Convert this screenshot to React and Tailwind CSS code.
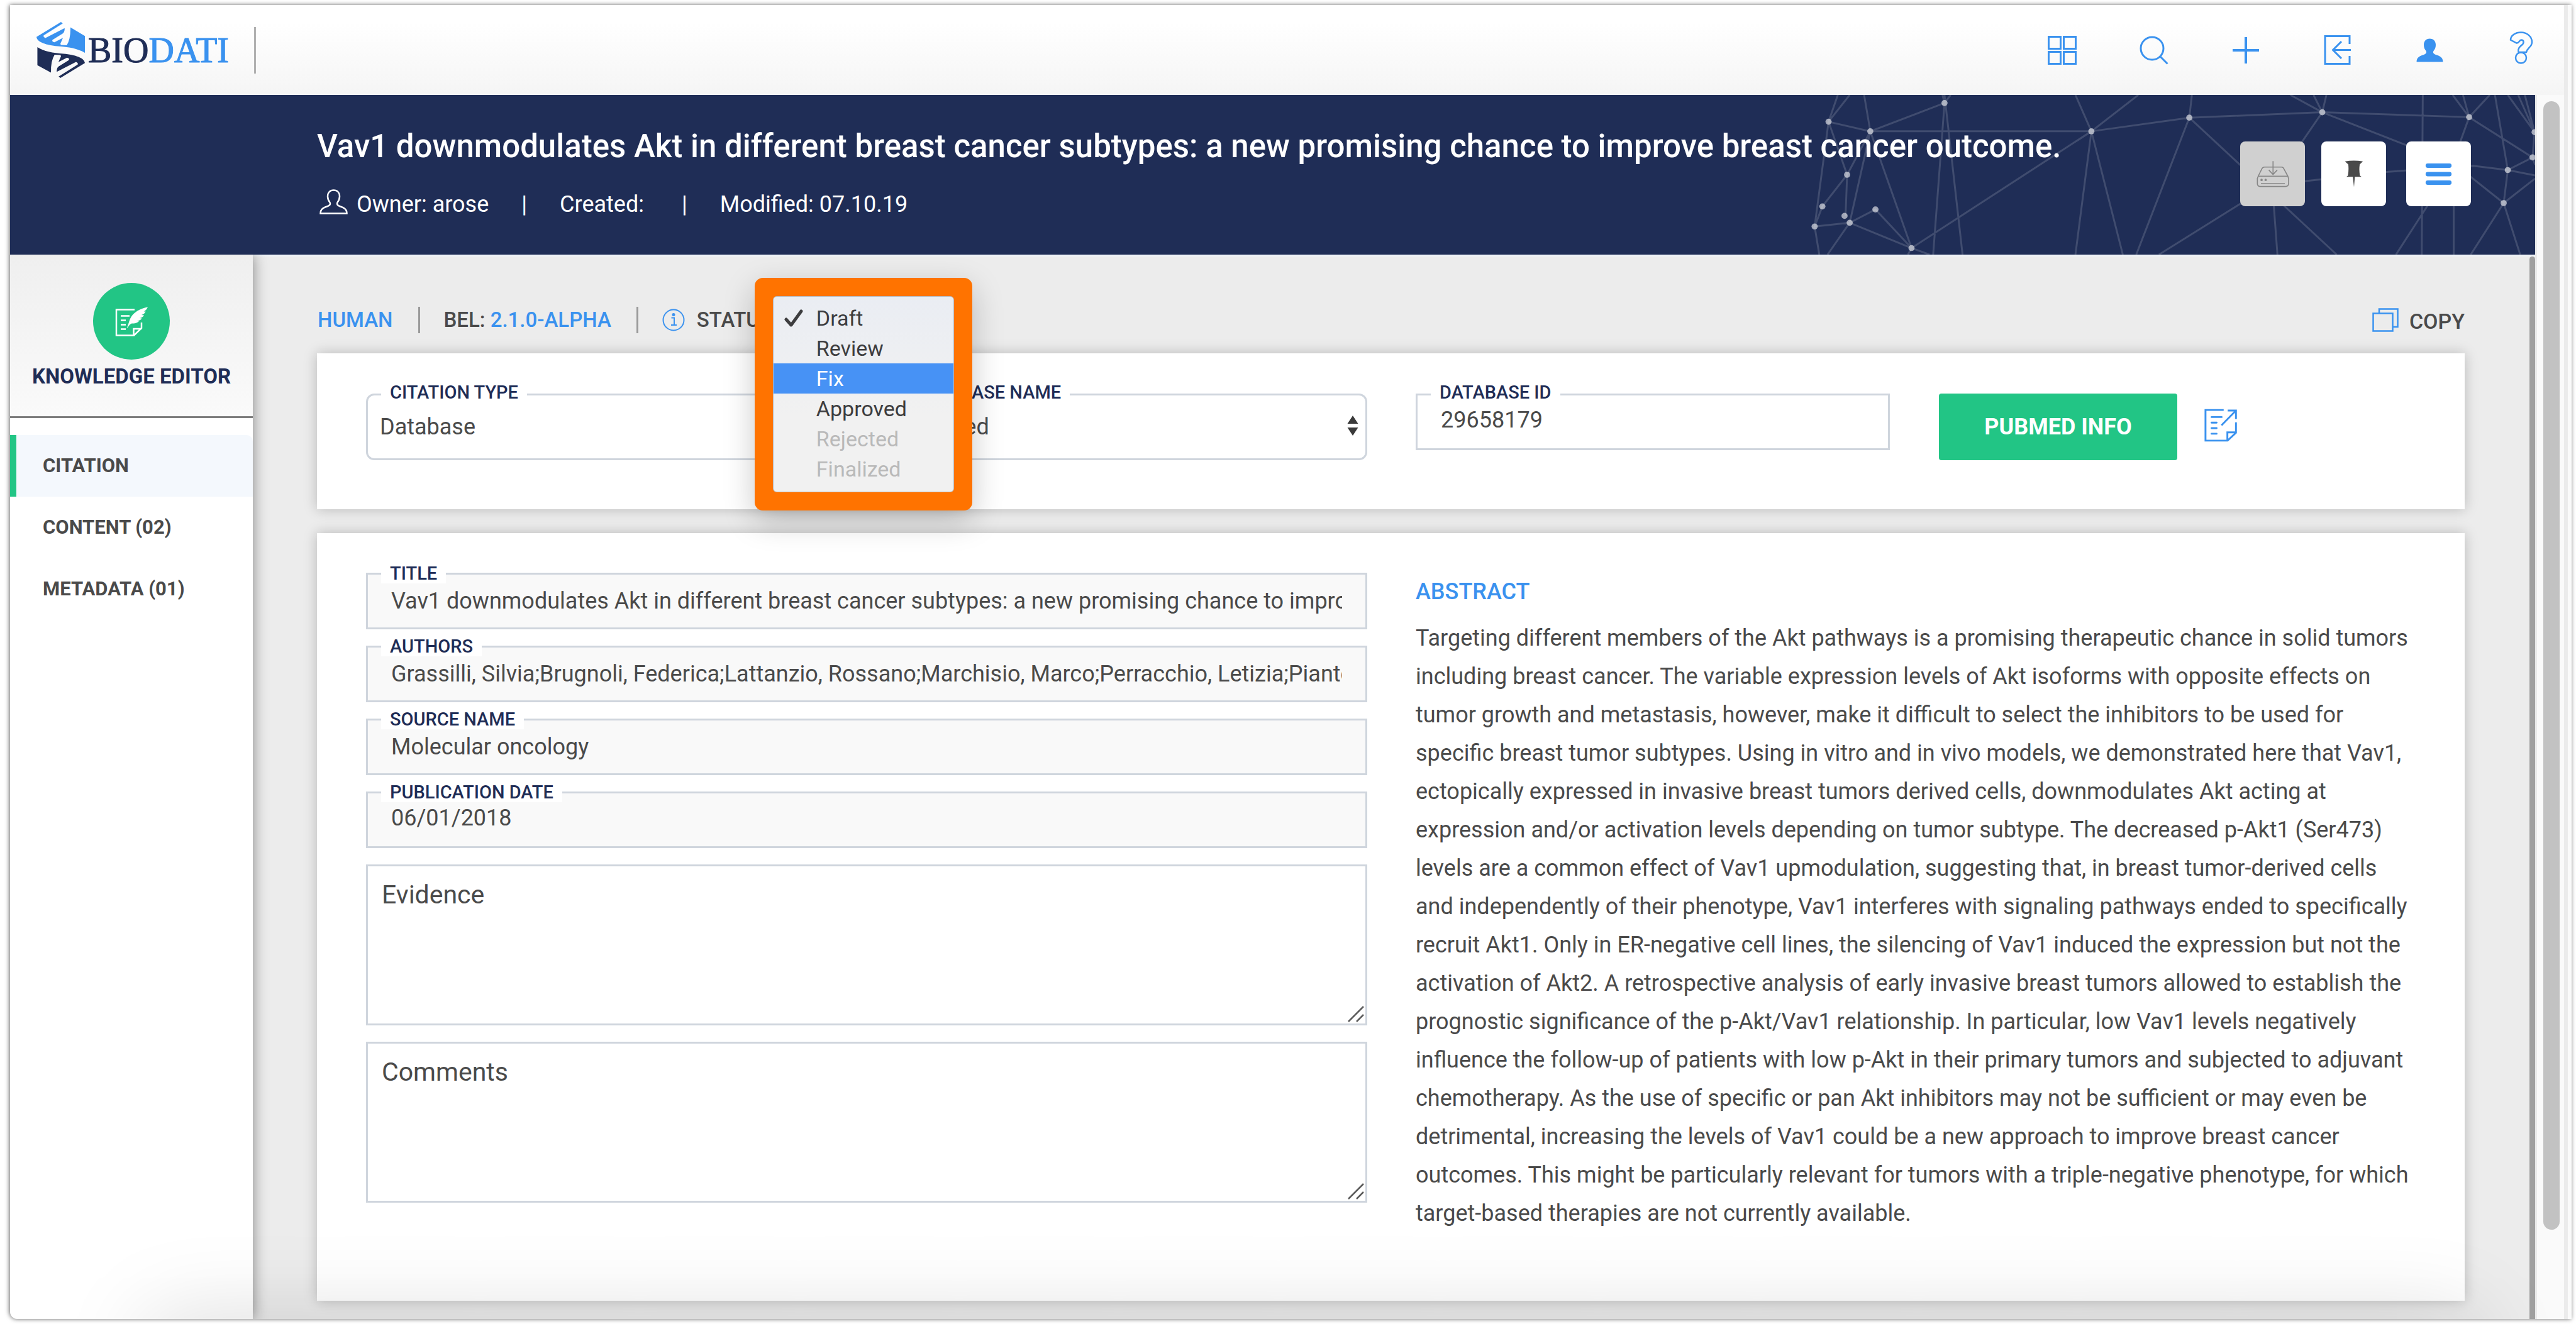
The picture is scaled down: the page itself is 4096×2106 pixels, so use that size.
import React from "react";

const stroke = { fill: "none", stroke: "currentColor" };

function Logo() {
  return (
    <svg viewBox="203 124 267 332" preserveAspectRatio="none" className="h-[89px] w-[77px]" aria-hidden="true">
      <path
        fill="#3a92ef"
        d="M203 213L338 124L348 132L243 203Q238 212 252 219L358 160Q360 182 348 192L291 230Q287 241 302 244L349 218Q346 226 335 252L337 260L370 262Q392 225 390 156L470 207V307C430 282 380 272 320 268C260 262 206 245 203 213Z"
      />
      <path
        transform="rotate(180 336.5 290)"
        fill="#1f2d56"
        d="M203 213L338 124L348 132L243 203Q238 212 252 219L358 160Q360 182 348 192L291 230Q287 241 302 244L349 218Q346 226 335 252L337 260L370 262Q392 225 390 156L465 200V307C430 282 380 272 320 268C260 262 206 245 203 213Z"
      />
    </svg>
  );
}

const PERSON =
  "M22.5 1.5C28.5 1.5 32 5.5 32 11.5C32 16 30.5 18.5 28.5 21C27 24 28.5 25.5 32 27C38 29 43.5 31 43.5 38.5H1.5C1.5 31 7 29 13 27C16.500 25.500 18 24 16.500 21C14.500 18.500 13 16 13 11.500C13 5.500 16.500 1.500 22.500 1.500Z";

const NAV_ICONS = [
  {
    label: "Dashboard",
    icon: (
      <svg viewBox="0 0 46 46" className="h-[46px] w-[46px]" {...stroke} strokeWidth="3">
        <path d="M1.500 1.500H20.500V20.500H1.500ZM25.500 1.500H44.500V20.500H25.500ZM1.500 25.500H20.500V44.500H1.500ZM25.500 25.500H44.500V44.500H25.500Z" />
      </svg>
    ),
  },
  {
    label: "Search",
    icon: (
      <svg viewBox="0 0 46 46" className="h-[46px] w-[46px]" {...stroke} strokeWidth="3">
        <circle cx="20" cy="20" r="18" />
        <path d="M32 32L44.500 44.500" />
      </svg>
    ),
  },
  {
    label: "Add",
    icon: (
      <svg viewBox="0 0 42 42" className="h-[42px] w-[42px]" {...stroke} strokeWidth="4">
        <path d="M21 0V42M0 21H42" />
      </svg>
    ),
  },
  {
    label: "Import",
    icon: (
      <svg viewBox="0 0 44 47" className="h-[47px] w-[44px]" {...stroke} strokeWidth="3">
        <path d="M41 14V1.500H2V45.500H41V33M43 23.500H15M28 10L14.500 23.500L28 37" />
      </svg>
    ),
  },
  {
    label: "Account",
    icon: (
      <svg viewBox="0 0 45 40" className="h-[40px] w-[45px]" fill="currentColor">
        <path d={PERSON} />
      </svg>
    ),
  },
  {
    label: "Help",
    icon: (
      <svg viewBox="0 0 38 52" className="mb-2 h-[52px] w-[38px]" {...stroke} strokeWidth="2.500">
        <path d="M2 13.500C2 6 10 1.500 18.500 1.500C28 1.500 36 8 36 17C36 25 29 25 27 33H14.500C13 27 17 24 20 21.500C24 18 23 13.500 19 13.500C15.500 13.500 16 19 11.500 18.500Z" />
        <circle cx="18.500" cy="42" r="8.500" />
      </svg>
    ),
  },
];

function Header() {
  return (
    <header className="flex h-[143px] items-center bg-gradient-to-b from-white from-20% to-[#f5f5f5]">
      <a href="#home" aria-label="BIODATI" className="ml-[42px] flex items-center gap-[5px]">
        <Logo />
        <span className="font-['Liberation_Serif',serif] text-[56px] leading-[60px] text-[#1f2d56] [-webkit-text-stroke:1px]">
          BIO<span className="text-[#3a92ef]">DATI</span>
        </span>
      </a>
      <div className="ml-[40px] h-[74px] w-[3px] bg-[#b0b0b0]" />
      <nav className="mr-[1px] ml-auto flex gap-3 text-[#3a92ef]">
        {NAV_ICONS.map((n) => (
          <button key={n.label} type="button" aria-label={n.label} className="flex h-[60px] w-[134px] items-center justify-center">
            {n.icon}
          </button>
        ))}
      </nav>
    </header>
  );
}

const NODES = [
  [119, 243], [200, 300], [344, 132], [629, 300], [819, 219], [1077, 187], [1362, 216], [1489, 305], [1485, 455],
  [1437, 530], [1429, 726], [155, 558], [107, 746], [150, 802], [160, 843], [92, 865], [210, 764], [280, 993],
];

const EDGES =
  "M160 84L119 243L200 300L344 132L356 84M137 84L119 243M188 84L200 300H629L819 219L1077 187L1362 216L1485 455L1437 530L1429 726" +
  "M119 243L155 558L107 746L92 865L160 843L210 764L280 993L160 843M119 243L92 865L101 1032M200 300L155 558L152 802M200 300L160 843L117 1032" +
  "M200 300L280 993L629 300M340 84L344 132L322 1032M344 84L379 1032M273 1032L280 993L315 1032M598 84L629 300L720 84M598 1032L629 300L690 1032" +
  "M824 84L819 219L716 1032M819 219L1105 1032M1060 84L1077 187L1085 84M1015 84L1077 187L980 620L990 1032M760 1032L960 650L1045 595L1205 540L1370 505L1437 530L1490 562" +
  "M1077 187L1240 382L1365 570L1429 726L1490 580M1272 84L1270 1032M1330 84L1362 216L1350 84M1402 84L1362 216L1345 360L1332 745V1032" +
  "M1412 84L1437 530M1437 84L1489 305L1457 84M1470 84L1489 305L1485 455L1490 500M1365 1032L1429 726L1461 1032M1290 700L1220 1032";

function Network() {
  return (
    <svg viewBox="0 84 1490 948" preserveAspectRatio="none" className="absolute top-0 right-0 h-full w-[1221px]" aria-hidden="true">
      <path d={EDGES} fill="none" stroke="#ffffff" strokeOpacity="0.15" strokeWidth="3" vectorEffect="non-scaling-stroke" />
      {NODES.map(([x, y]) => (
        <ellipse key={x + "-" + y} cx={x} cy={y} rx="6" ry="18" fill="#ffffff" fillOpacity="0.58" />
      ))}
    </svg>
  );
}

function Hero() {
  const box = "flex h-[103px] w-[103px] items-center justify-center rounded-lg";
  return (
    <section className="relative z-20 flex h-[254px] items-start bg-[#1f2d56] pl-[488px] text-white">
      <Network />
      <div className="relative flex-1 pt-[52px]">
        <h1 className="text-[51px] leading-[60px] font-medium whitespace-nowrap">
          Vav1 downmodulates Akt in different breast cancer subtypes: a new promising chance to improve breast cancer outcome.
        </h1>
        <div className="mt-8 flex items-center gap-[52px] text-[36px] leading-[60px] whitespace-nowrap">
          <span className="flex items-center gap-[14px]">
            <svg viewBox="0 0 45 40" className="mb-2 ml-1 h-[40px] w-[45px]" {...stroke} strokeWidth="2.500">
              <path d={PERSON} />
            </svg>
            Owner: arose
          </span>
          <span>|</span>
          <span className="pr-2">Created:</span>
          <span>|</span>
          <span>Modified: 07.10.19</span>
        </div>
      </div>
      <div className="relative mt-[74px] mr-[102px] flex">
        <button type="button" disabled aria-label="Save" className={box + " bg-[#d0d0d0]"}>
          <svg viewBox="138 88 194 160" className="h-[43px] w-[52px]" fill="none" stroke="#868686" strokeWidth="6">
            <path d="M143 196V226Q143 243 160 243H310Q328 243 328 226V196L324 182H148ZM148 182L170 138Q175 128 186 128H286Q296 128 300 138L324 182M236 92V170M211 145L236 172L261 145M164 226H306" />
            <circle cx="168" cy="204" r="4" />
            <circle cx="192" cy="204" r="4" />
          </svg>
        </button>
        <button type="button" aria-label="Pin" className={box + " ml-[26px] bg-white"}>
          <svg viewBox="660 88 112 160" className="h-[43px] w-[30px]" fill="#4a4a4a">
            <path d="M662 94Q715 86 769 94L750 112Q745 145 751 178L761 186H721L716 246L709 186H671L680 178Q686 145 682 112Z" />
          </svg>
        </button>
        <button type="button" aria-label="Menu" className={box + " ml-[32px] bg-white"}>
          <svg viewBox="1144 100 160 136" className="h-[36px] w-[43px]" stroke="#3a92ef" strokeWidth="26" strokeLinecap="round">
            <path d="M1159 117H1289M1159 168H1289M1159 219H1289" />
          </svg>
        </button>
      </div>
    </section>
  );
}

const SECTIONS = [
  { label: "CITATION", active: true },
  { label: "CONTENT (02)" },
  { label: "METADATA (01)" },
];

function Sidebar() {
  return (
    <aside className="relative z-10 w-[386px] shrink-0 bg-white shadow-[0_0_22px_rgba(0,0,0,0.45)]">
      <div className="flex flex-col items-center border-b-3 border-[#7c7c7c] bg-gradient-to-b from-[#efefef] to-[#fafafa] pt-[45px] pb-[45px]">
        <div className="flex h-[122px] w-[122px] items-center justify-center rounded-full bg-[#22c585]">
          <svg viewBox="0 0 53 47" className="h-[47px] w-[53px]" fill="none" stroke="#ffffff" strokeWidth="2.500">
            <path d="M31 4.500H2V45.500H30L42 34V25M29.500 45V35H42" />
            <path d="M9 14.500H23M9 21.500H17M9 28.500H17M9 35.500H17" />
            <path
              fill="#ffffff"
              stroke="none"
              d="M52 0.500C39 3 29 9 24.500 18C22 23 21 29 18.500 34.500C22 31 23 27.500 26.500 26.500C31 26.500 35 26 38 23L34.500 22.500C38 22.500 40.500 21 42.500 18.500L39 18C42 17.500 44.500 16 46 13.500L42 13C45.500 12 47.500 10 48.500 7.500L45.500 7.500C48.500 6 50.500 4 52 0.500Z"
            />
          </svg>
        </div>
        <h2 className="mt-[9px] text-[33px] leading-9 font-bold text-[#1f2d56]">KNOWLEDGE EDITOR</h2>
      </div>
      <nav className="mt-[27px]">
        {SECTIONS.map((s) => (
          <a
            key={s.label}
            href="#section"
            className={
              "flex h-[98px] items-center border-l-10 pl-[42px] text-[31px] font-bold text-[#4a4a4a] " +
              (s.active ? "rounded-tr-[10px] border-[#22c585] bg-[#f4f8fd]" : "border-transparent")
            }
          >
            {s.label}
          </a>
        ))}
      </nav>
    </aside>
  );
}

const STATUSES = [
  { label: "Draft", checked: true },
  { label: "Review" },
  { label: "Fix", hot: true },
  { label: "Approved" },
  { label: "Rejected", disabled: true },
  { label: "Finalized", disabled: true },
];

function StatusMenu() {
  return (
    <div className="absolute top-[-42px] left-[92px] z-30 w-[346px] rounded-[13px] bg-[#ff7300] p-[29px] font-normal shadow-[0_16px_50px_rgba(0,0,0,0.22)]">
      <ul role="listbox" aria-label="Status" className="rounded-[6px] border border-[#b9b9b9] bg-gradient-to-b from-[#eaedf3] to-[#f1f1f1] to-60% pt-[10px] pb-[12px]">
        {STATUSES.map((s) => (
          <li key={s.label} role="option" aria-selected={Boolean(s.checked)}>
            <button
              type="button"
              disabled={s.disabled}
              className={
                "flex h-12 w-full items-center text-[34px] " +
                (s.hot ? "bg-[#4792f5] text-white" : s.disabled ? "text-[#b9b9b9]" : "text-[#3d3d3f]")
              }
            >
              <span className="flex w-[68px] justify-center pr-1">
                {s.checked && (
                  <svg viewBox="0 0 30 28" className="h-[28px] w-[30px]" {...stroke} strokeWidth="5" strokeLinecap="round" strokeLinejoin="round">
                    <path d="M3 16L11 25L27 3" />
                  </svg>
                )}
              </span>
              {s.label}
            </button>
          </li>
        ))}
      </ul>
    </div>
  );
}

function Toolbar() {
  const bar = "h-[42px] w-[3px] bg-[#9b9b9b]";
  return (
    <div className="flex h-[42px] items-center text-[33px] font-medium text-[#4a4a4a]">
      <a href="#human" className="ml-[1px] text-[#3a92ef]">HUMAN</a>
      <div className={bar + " ml-[41px]"} />
      <span className="ml-[37px]">
        BEL: <a href="#bel" className="text-[#3a92ef]">2.1.0-ALPHA</a>
      </span>
      <div className={bar + " ml-[40px]"} />
      <svg viewBox="0 0 36 36" className="ml-[38px] h-9 w-9 text-[#3a92ef]" {...stroke} strokeWidth="2">
        <circle cx="18" cy="18" r="16.500" />
        <path d="M14.500 14.500H19V26M14 26H23" />
        <circle cx="18" cy="9.500" r="1.500" fill="currentColor" />
      </svg>
      <div className="relative ml-[19px]">
        <span>STATUS:</span>
        <StatusMenu />
      </div>
      <button type="button" className="ml-auto flex items-center gap-[17px] text-[34px]">
        <svg viewBox="0 0 42 38" className="h-[38px] w-[42px] text-[#3a92ef]" {...stroke} strokeWidth="2.500">
          <path d="M1.500 8.500H32.500V36.500H1.500ZM11 8V1.500H40.500V30H33" />
        </svg>
        <span className="mt-1">COPY</span>
      </button>
    </div>
  );
}

const labelStyle =
  "absolute left-[24px] z-10 bg-white px-[14px] text-[29px] leading-8 font-medium whitespace-nowrap text-[#1f2d56]";

function SelectField({ id, label, value }) {
  return (
    <div className="relative flex-1">
      <label htmlFor={id} className={labelStyle + " top-[-18px]"}>{label}</label>
      <select
        id={id}
        defaultValue={value}
        className="h-[106px] w-full appearance-none rounded-[13px] border-3 border-[#cfd5dd] bg-white pl-[19px] text-[36px] text-[#4a4a4a]"
      >
        <option>{value}</option>
      </select>
      <svg viewBox="0 0 18 32" className="pointer-events-none absolute top-[35px] right-[14px] h-[32px] w-[18px]" fill="#3a3a3a" aria-hidden="true">
        <path d="M9 0L17.500 13H0.500ZM9 32L17.500 19H0.500Z" />
      </svg>
    </div>
  );
}

function ReadOnlyField({ id, label, value, raised }) {
  return (
    <div className="relative">
      <label htmlFor={id} className={labelStyle + " top-[-15px]"}>{label}</label>
      <input
        id={id}
        readOnly
        defaultValue={value}
        className={
          "block h-[90px] w-full border-3 border-[#cfd5dd] bg-[#f9f9f9] px-[37px] text-[36px] text-[#4a4a4a] " + (raised ? "pb-[6px]" : "")
        }
      />
    </div>
  );
}

function NoteField({ label }) {
  return (
    <div className="relative">
      <textarea
        aria-label={label}
        placeholder={label}
        className="block h-[256px] w-full resize-none border-3 border-[#cfd5dd] bg-white px-[22px] py-[21px] text-[41px] leading-[48px] placeholder:text-[#4a4a4a]"
      />
      <svg viewBox="0 0 28 28" className="pointer-events-none absolute right-[4px] bottom-[4px] h-7 w-7" fill="none" stroke="#5a5a5a" strokeWidth="2.500" aria-hidden="true">
        <path d="M2 26L26 2M15 26L26 15" />
      </svg>
    </div>
  );
}

const ABSTRACT =
  "Targeting different members of the Akt pathways is a promising therapeutic chance in solid tumors including breast cancer. The variable expression levels of Akt isoforms with opposite effects on tumor growth and metastasis, however, make it difficult to select the inhibitors to be used for specific breast tumor subtypes. Using in vitro and in vivo models, we demonstrated here that Vav1, ectopically expressed in invasive breast tumors derived cells, downmodulates Akt acting at expression and/or activation levels depending on tumor subtype. The decreased p-Akt1 (Ser473) levels are a common effect of Vav1 upmodulation, suggesting that, in breast tumor-derived cells and independently of their phenotype, Vav1 interferes with signaling pathways ended to specifically recruit Akt1. Only in ER-negative cell lines, the silencing of Vav1 induced the expression but not the activation of Akt2. A retrospective analysis of early invasive breast tumors allowed to establish the prognostic significance of the p-Akt/Vav1 relationship. In particular, low Vav1 levels negatively influence the follow-up of patients with low p-Akt in their primary tumors and subjected to adjuvant chemotherapy. As the use of specific or pan Akt inhibitors may not be sufficient or may even be detrimental, increasing the levels of Vav1 could be a new approach to improve breast cancer outcomes. This might be particularly relevant for tumors with a triple-negative phenotype, for which target-based therapies are not currently available.";

const card = "grid grid-cols-2 gap-x-[77px] bg-white pr-[76px] pl-[78px] shadow-[0_0_20px_rgba(0,0,0,0.22)]";

function CitationCard() {
  return (
    <section className={card + " h-[248px] items-start pt-[64px]"}>
      <div className="flex gap-[78px]">
        <SelectField id="citation-type" label="CITATION TYPE" value="Database" />
        <SelectField id="database-name" label="DATABASE NAME" value="Pubmed" />
      </div>
      <div className="flex items-start">
        <div className="relative w-[754px]">
          <label htmlFor="database-id" className={labelStyle + " top-[-18px]"}>DATABASE ID</label>
          <input
            id="database-id"
            defaultValue="29658179"
            className="block h-[90px] w-full border-3 border-[#cfd5dd] bg-white px-[37px] pb-[6px] text-[36px] text-[#4a4a4a]"
          />
        </div>
        <button type="button" className="ml-[78px] h-[106px] w-[379px] rounded-[4px] bg-[#22c585] text-[36px] font-bold text-white">
          PUBMED INFO
        </button>
        <button type="button" aria-label="Edit citation" className="mt-[23px] ml-[43px] text-[#3a92ef]">
          <svg viewBox="78 84 198 204" className="h-[55px] w-[53px]" {...stroke} strokeWidth="11">
            <path d="M193 95H85V277H216L266 230V168M215 277V228H266M217 98H266V149M266 98L180 186" />
            <path strokeLinecap="round" d="M121 137H181M121 170H151M121 203H151M121 236H151" />
          </svg>
        </button>
      </div>
    </section>
  );
}

function DetailsCard() {
  return (
    <section className={card + " mt-[38px] flex-1 pt-[63px] pb-8"}>
      <div className="flex flex-col gap-[26px]">
        <ReadOnlyField id="title" label="TITLE" value="Vav1 downmodulates Akt in different breast cancer subtypes: a new promising chance to improve breast cancer outcome." />
        <ReadOnlyField
          id="authors"
          label="AUTHORS"
          value="Grassilli, Silvia;Brugnoli, Federica;Lattanzio, Rossano;Marchisio, Marco;Perracchio, Letizia;Piantelli, Mauro"
        />
        <ReadOnlyField id="source" label="SOURCE NAME" value="Molecular oncology" />
        <ReadOnlyField id="date" label="PUBLICATION DATE" value="06/01/2018" raised />
        <NoteField label="Evidence" />
        <NoteField label="Comments" />
      </div>
      <div className="text-[36px] leading-[61px] text-[#4a4a4a]">
        <h3 className="font-medium text-[#3a92ef]">ABSTRACT</h3>
        <p className="mt-[13px]">{ABSTRACT}</p>
      </div>
    </section>
  );
}

export default function App() {
  return (
    <div className="flex min-h-screen flex-col bg-white px-[7px] pt-2 pb-2 pl-4 font-[Roboto,sans-serif]">
      <div className="relative flex flex-1 overflow-hidden rounded-bl-[12px] bg-[#fafafa] shadow-[-1px_0_7px_rgba(0,0,0,0.6)]">
        <div className="flex min-w-0 flex-1 flex-col">
          <Header />
          <div className="flex flex-1">
            <div className="flex min-w-0 flex-1 flex-col bg-[#ececec]">
              <Hero />
              <div className="flex flex-1">
                <Sidebar />
                <div className="flex min-w-0 flex-1 flex-col border-t-3 border-[#eff3f7]">
                  <div className="flex flex-1">
                    <main className="flex min-w-0 flex-1 flex-col pt-[80px] pr-[103px] pb-[29px] pl-[102px]">
                      <Toolbar />
                      <div className="h-8" />
                      <CitationCard />
                      <DetailsCard />
                    </main>
                    <div className="w-[9px] rounded-t-full bg-[#a0a0a0]" />
                  </div>
                </div>
              </div>
            </div>
            <div className="w-[46px] border-l-3 border-[#ebebeb] bg-[#fafafa] pt-[10px] pb-[142px]">
              <div className="ml-[10px] h-full w-[26px] rounded-full bg-[#c2c2c2]" />
            </div>
          </div>
        </div>
        <div className="w-3 border-l-6 border-[#ebebeb] bg-[#fafafa]" />
        <div className="pointer-events-none absolute inset-x-0 bottom-0 z-40 h-[300px] overflow-hidden">
          <div className="mt-[300px] mr-[150px] ml-[220px] h-[200px] shadow-[0_0_140px_rgba(0,0,0,0.15)]" />
        </div>
      </div>
    </div>
  );
}
